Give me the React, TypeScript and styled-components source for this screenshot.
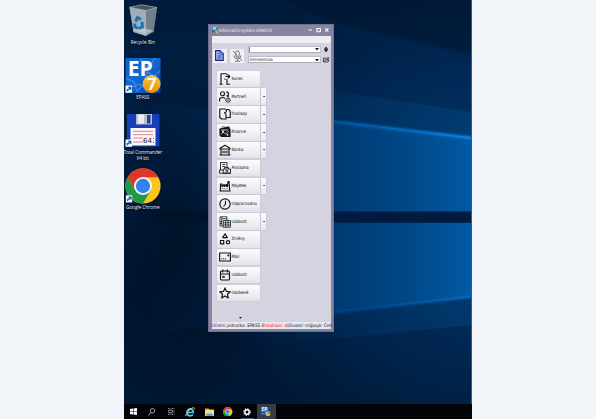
import React from 'react';
import styled, { createGlobalStyle } from 'styled-components';

const GlobalStyle = createGlobalStyle`
  * { box-sizing: border-box; }
  html, body { margin: 0; width: 100%; height: 100%; overflow: hidden; background: #f1f5f9; }
  svg { display: block; flex: none; }
`;

const Page = styled.main`
  display: flex;
  justify-content: center;
  width: 596px;
  height: 419px;
  background: #f1f5f9;
`;

const Desktop = styled.section`
  position: relative;
  display: flex;
  flex-direction: column;
  width: 348px;
  height: 419px;
  overflow: hidden;
  background: #001a3a;
  font-family: 'Open Sans', 'Noto Sans', sans-serif;
`;

const WallpaperLayer = styled.div`
  position: absolute;
  inset: 0;
`;

const ShortcutColumn = styled.div`
  position: relative;
  flex: 1;
  display: flex;
  flex-direction: column;
  width: 37.6px;
  padding-top: 3px;
`;

const Shortcut = styled.div`
  display: flex;
  flex-direction: column;
  align-items: center;
  height: 55px;
`;

const ShortcutLabel = styled.div<{ $spacing: number }>`
  margin-top: 1px;
  color: #e8edf4;
  font-size: 4.7px;
  line-height: 5.6px;
  letter-spacing: ${(p) => p.$spacing}px;
  text-align: center;
  white-space: pre;
  text-shadow: 0 0.5px 1px #000;
`;

const Taskbar = styled.footer`
  position: relative;
  display: flex;
  height: 15px;
  background: #02040a;
`;

const TaskButton = styled.div<{ $active?: boolean; $running?: boolean }>`
  display: flex;
  align-items: center;
  justify-content: center;
  width: 18.95px;
  height: 15px;
  background: ${(p) => (p.$active ? '#343b49' : 'transparent')};
  box-shadow: ${(p) => (p.$running ? 'inset 3px 0 #02040a, inset -3px 0 #02040a, inset 0 -1px #35688c' : 'none')};
`;

const AppWindow = styled.section`
  position: absolute;
  left: 84.3px;
  top: 24px;
  display: flex;
  flex-direction: column;
  width: 126.2px;
  height: 308.3px;
  padding: 0 2.6px 2.2px;
  background: #85859f;
  border: 0.5px solid #716f8d;
  font-family: 'DejaVu Sans Condensed', 'DejaVu Sans', sans-serif;
`;

const TitleBar = styled.header`
  display: flex;
  align-items: center;
  height: 10.7px;
  flex: none;
  color: #eeeef7;
`;

const Title = styled.h1`
  flex: 1;
  margin: 0 0 0 0.2px;
  font: 400 4.5px/9px 'DejaVu Sans Condensed', 'DejaVu Sans', sans-serif;
  letter-spacing: -0.06px;
  white-space: nowrap;
`;

const MenuBar = styled.div`
  height: 7.4px;
  flex: none;
  background: #edecf4;
`;

const Client = styled.div`
  flex: 1;
  display: flex;
  flex-direction: column;
  min-height: 0;
  background: #d4d3df;
`;

const Toolbar = styled.div`
  display: flex;
  align-items: center;
  height: 23px;
  padding: 1px 2px 0 0.7px;
`;

const ToolButton = styled.button`
  display: flex;
  flex: none;
  align-items: center;
  justify-content: center;
  width: 14.2px;
  height: 14.2px;
  margin: 1.5px 3.4px 0 0;
  padding: 0;
  border: 0;
  background: #efeff4;
`;

const Fields = styled.div`
  display: flex;
  flex-direction: column;
  gap: 3px;
  margin: 0 0 1px 0.7px;
`;

const FieldRow = styled.div`
  display: flex;
  align-items: center;
  gap: 2px;
  height: 7.4px;
`;

const Combo = styled.div`
  display: flex;
  align-items: center;
  justify-content: space-between;
  width: 73px;
  height: 7.4px;
  padding: 0 1px 0 0;
  border: 1px solid #bdbdc9;
  border-bottom-color: #adadb9;
  background: #fff;
  color: #26262c;
  font-size: 4.5px;
  line-height: 5px;
  letter-spacing: -0.06px;
`;

const Caret = styled.span`
  width: 1px;
  height: 5px;
  background: #8a8a92;
`;

const Menu = styled.nav`
  display: flex;
  flex-direction: column;
  gap: 1.46px;
  margin: 4.5px 0 0 5px;
`;

const MenuRow = styled.div`
  display: flex;
  gap: 1.4px;
  height: 16.4px;
`;

const MenuButton = styled.button`
  display: flex;
  align-items: center;
  gap: 0.6px;
  width: 43.2px;
  height: 16.4px;
  padding: 0 0 0 2px;
  border: 0;
  border-radius: 0.6px;
  background: linear-gradient(#fbfbfc, #eeeef2 65%, #e2e1e9);
  box-shadow: 0 0 1px #9f9eac;
  color: #131318;
  font: 400 4.4px/6px 'DejaVu Sans Condensed', 'DejaVu Sans', sans-serif;
  letter-spacing: -0.09px;
  white-space: nowrap;
`;

const SplitButton = styled.button`
  display: flex;
  align-items: center;
  justify-content: center;
  width: 4.4px;
  height: 16.4px;
  padding: 0;
  border: 0;
  background: linear-gradient(#fbfbfc, #e9e9ef);
  box-shadow: 0 0 1px #9f9eac;
`;

const Overflow = styled.div`
  flex: 1;
  display: flex;
  align-items: flex-end;
  justify-content: center;
  padding: 0 62px 2.4px 0;
`;

const StatusBar = styled.footer`
  display: flex;
  flex: none;
  height: 7.5px;
  background: #e9e8f0;
  color: #24242b;
  font-size: 4.7px;
  line-height: 7.3px;
`;

const StatusCell = styled.span<{ $width: number; $spacing?: number; $alert?: boolean }>`
  width: ${(p) => p.$width}px;
  flex: none;
  white-space: nowrap;
  letter-spacing: ${(p) => p.$spacing ?? 0}px;
  color: ${(p) => (p.$alert ? '#f0242c' : 'inherit')};
`;

const Wallpaper = () => (
  <svg width="348" height="419" viewBox="124 0 348 419">
    <defs>
      <linearGradient id="base" x1="0" y1="0" x2="0" y2="1">
        <stop offset="0" stopColor="#001b3b" /><stop offset=".45" stopColor="#002149" />
        <stop offset=".7" stopColor="#00183a" /><stop offset="1" stopColor="#001833" />
      </linearGradient>
      <radialGradient id="glow" gradientUnits="userSpaceOnUse" cx="490" cy="220" r="310">
        <stop offset="0" stopColor="#0066b9" stopOpacity=".42" /><stop offset=".55" stopColor="#00458a" stopOpacity=".24" />
        <stop offset="1" stopColor="#001a39" stopOpacity="0" />
      </radialGradient>
      <linearGradient id="pane" x1="0" x2="1">
        <stop offset="0" stopColor="#002b59" stopOpacity=".1" /><stop offset=".57" stopColor="#003a73" />
        <stop offset=".8" stopColor="#004886" /><stop offset="1" stopColor="#005aa6" />
      </linearGradient>
      <linearGradient id="ray" x1="0" x2="1">
        <stop offset="0" stopColor="#003e7d" stopOpacity="0" /><stop offset=".45" stopColor="#0065ba" stopOpacity=".75" />
        <stop offset="1" stopColor="#0b84ea" />
      </linearGradient>
      <linearGradient id="beam" x1="0" x2="1">
        <stop offset="0" stopColor="#004275" stopOpacity="0" /><stop offset="1" stopColor="#004b87" stopOpacity=".42" />
      </linearGradient>
      <radialGradient id="left"><stop stopColor="#00070f" stopOpacity=".55" /><stop offset="1" stopColor="#00070f" stopOpacity="0" /></radialGradient>
      <filter id="soft" x="-10%" y="-30%" width="120%" height="160%"><feGaussianBlur stdDeviation="1.2" /></filter>
    </defs>
    <path d="M124 0h348v419H124z" fill="url(#base)" />
    <path d="M124 0h348v419H124z" fill="url(#glow)" />
    <path d="M285 0H472V55L334 22z" fill="#00152f" opacity=".55" filter="url(#soft)" />
    <path d="M240 77L472 112V138L240 111z" fill="url(#beam)" />
    <path d="M150 102L472 138V212H150z" fill="url(#pane)" />
    <path d="M150 223H472V297L150 333z" fill="url(#pane)" />
    <path d="M240 110.5L472 138" stroke="url(#ray)" strokeWidth="2.8" filter="url(#soft)" />
    <path d="M240 110.5L472 138" stroke="url(#ray)" strokeWidth=".8" />
    <path d="M240 324L472 297" stroke="url(#ray)" strokeWidth="1.8" opacity=".8" filter="url(#soft)" />
    <path d="M150 211.5H472V222.5H150z" fill="#001b3f" />
    <path d="M240 327L472 298V325L240 348z" fill="url(#beam)" />
    <ellipse cx="180" cy="240" rx="110" ry="180" fill="url(#left)" />
    <path d="M471.5 0V404" stroke="#315d83" />
  </svg>
);

const Arrow = ({ y = 27 }: { y?: number }) => (
  <g transform={`translate(0.5 ${y - 0.5})`}>
    <path d="M0 0h6.5v7.3H0z" fill="#f2f6fa" />
    <path d="M1.8 5.8V4h2M2.6 1.8h2.7v2.7M5 2L2.4 4.6" fill="none" stroke="#17579a" strokeWidth="1.1" />
  </g>
);

const RecycleArt = () => (
  <svg width="36" height="36" viewBox="0 0 36 36">
    <path d="M4.5 4.2L17 1.8L32 4.4L28.5 28.8L21 33L8.5 29z" fill="#8996a1" opacity=".95" />
    <path d="M4.5 4.2L21 7.5L21 33L8.5 29z" fill="#a3adb6" /><path d="M21 7.5L32 4.4L28.5 28.8L21 33z" fill="#727f8c" />
    <path d="M4.5 4.2L17 1.8L32 4.4L21 7.5z" fill="#46545f" stroke="#c3cad0" strokeWidth=".5" />
    <path d="M8.5 27L15 24L28.5 27.5L21 31.8z" fill="#cbd1d6" opacity=".65" />
    <g fill="none" stroke="#1674bd" strokeWidth="2.8"><path d="M10.5 18.5l2-4 3.5 2" /><path d="M17 19l.5 5-4 1.5" /><path d="M13 25.5l-3.5-2 .5-3" /></g>
  </svg>
);

const EpassArt = () => (
  <svg width="36" height="36" viewBox="0 0 36 36">
    <defs>
      <linearGradient id="epbg" x1="0" x2="1" y1="0" y2="1"><stop stopColor="#0864ce" /><stop offset=".5" stopColor="#1269d0" /><stop offset="1" stopColor="#083bab" /></linearGradient>
      <linearGradient id="epgold" x1="0" y1="0" x2="0" y2="1"><stop stopColor="#ffc440" /><stop offset="1" stopColor="#e88f0c" /></linearGradient>
    </defs>
    <path d="M.5 0H35.5V35H.5z" fill="url(#epbg)" />
    <path d="M1 20l8 4 3 9 7-7 3-12 7 4 6-5M15 1l6 8 5-3 4-6M1 31l13-5 8 5" fill="none" stroke="#72b4ef" strokeWidth="1.5" opacity=".4" />
    <text x="2.8" y="17.8" fill="#fff" fontFamily="Open Sans, sans-serif" fontSize="21" fontWeight="700" textLength="25" lengthAdjust="spacingAndGlyphs">EP</text>
    <circle cx="26.6" cy="26" r="9" fill="url(#epgold)" />
    <text x="22.2" y="32" fill="#fff" fontFamily="Open Sans, sans-serif" fontSize="16" fontWeight="700">7</text>
    <Arrow y={28} />
  </svg>
);

const FloppyArt = () => (
  <svg width="36" height="36" viewBox="0 0 36 36">
    <path d="M2 1h31.5l1 1v31.5H4l-2-2z" fill="#163fba" /><path d="M11 1h16v10.5H11z" fill="#b9c0ca" /><path d="M13 1.5h6v9h-6z" fill="#edf0f3" />
    <path d="M22 2h3.5v8.5H22z" fill="#24418e" /><path d="M5.5 15h25v17.5h-25z" fill="#faf8f8" />
    <path d="M8 18.3h20M8 21.7h20M8 25h10M8 29h10" stroke="#da777e" strokeWidth=".9" />
    <text x="18" y="30.4" fill="#262229" fontFamily="DejaVu Sans, sans-serif" fontSize="7">64</text><path d="M28.5 25v1M28.5 29v1" stroke="#262229" strokeWidth=".8" />
    <Arrow y={27} />
  </svg>
);

const ChromeMark = () => (
  <>
    <circle cx="18" cy="18" r="18" fill="#fac51f" />
    <path d="M2.4 9A18 18 0 0 1 33.6 9H18L10.2 13.5V22.5z" fill="#df3629" />
    <path d="M2.4 9L10.2 22.5L18 27 25.8 22.5 18 36A18 18 0 0 1 2.4 9" fill="#249943" />
    <circle cx="18" cy="18" r="9.2" fill="#f6f9fc" /><circle cx="18" cy="18" r="7.3" fill="#3182ed" />
  </>
);

const ChromeArt = () => <svg width="36" height="36" viewBox="-.4 -.4 36.8 36.8"><ChromeMark /><Arrow y={28} /></svg>;

const shortcuts = [
  { label: 'Recycle Bin', art: <RecycleArt />, spacing: -0.03 },
  { label: 'EPASS', art: <EpassArt />, spacing: -0.1 },
  { label: 'Total Commander\n64 bit', art: <FloppyArt />, spacing: -0.04 },
  { label: 'Google Chrome', art: <ChromeArt />, spacing: -0.04 },
];

const glyphs: Record<string, React.ReactNode> = {
  exit: <><path d="M1 22.5h6M4 22.5V1.5h11M16 1.5v3M16 12v10.5h6" /><path d="M12 11v2.5M13 7h8M18 3.5L21.5 7 18 10.5" /></>,
  people: <><circle cx="7" cy="5.5" r="4" /><path d="M1 21v-3q0-5 6-5 3 0 5 2M14 1.8q5 0 5 4t-4 4M17 10.5q2 .6 3 2" /><circle cx="18" cy="18.5" r="4" strokeWidth="1.5" /><circle cx="18" cy="18.5" r="1.2" strokeWidth="1" /><path d="M18 12.5v2M18 22.5v2M12 18.5h2M22 18.5h2M14 14.5l1 1M22 14.5l-1 1M14 22.5l1-1M22 22.5l-1-1" strokeWidth="1.2" /></>,
  documents: <><path d="M13 22H5l-3.5-3V2H12q3 0 3 4 0 3-4 3l3 4v9z" /><path d="M15 3h4q3.5 1 3.5 5v11H15" /></>,
  money: <><path d="M2 6l18-4v4h2v15H5l-3-3z" fill="currentColor" /><path d="M4 8h15M4 17l4-5 5 4 6-5" stroke="#ececf1" strokeWidth="1.6" /><circle cx="8" cy="11" r="2" fill="#ececf1" stroke="none" /><circle cx="17" cy="17.5" r="1.8" fill="#ececf1" stroke="none" /><path d="M5 4l4-3 4 2 4-1 3 2" strokeWidth="1.5" /></>,
  bank: <><path d="M2 8.5l10-6 10 6v1.5H2zM1 22h22M4 10v11M20 10v11" /><path d="M8 13.5v5M12 13.5v5M16 13.5v5" /></>,
  cash: <g strokeWidth="1.7"><path d="M3 16V1h13v11M6.5 5h6M6.5 9h6M1 22.5V16h7M1 22.5h22" /><path d="M8.5 14H23v8.5H8.5zM11 14v-3h8v3" /><circle cx="15.7" cy="18.2" r="2" /></g>,
  factory: <><path d="M3 21V8h3v5l4.5-4v4L15 9v4h2l1-10h2l1.5 18M1 22h22" /><path d="M7 17.5h1.5M11.2 17.5h1.5M15.5 17.5H17" /></>,
  clock: <><circle cx="12" cy="12" r="10.3" /><path d="M13 5.5V12l-4 5" /></>,
  tables: <g strokeWidth="1.5"><path d="M8 20H2V1.5h14V8M5.5 2v17M6 5.5h10M2 11h4M2 15h4" /><path d="M8.5 9H23v13.5H8.5zM8.5 13.5H23M8.5 18H23M13.3 9v13.5M18.2 9v13.5" /></g>,
  shapes: <><path d="M12 1.5l4.5 7.7h-9zM3 15h6.5v6.8H3z" /><circle cx="18" cy="18.5" r="3.4" /></>,
  mail: <><path d="M1.2 4h21.6v16H1.2z" /><path d="M4.5 15.5h2.2M8 15.5h2.2M11.5 15.5h2.2" strokeWidth="1.8" /><path d="M17.5 7.5h2v2.5h-2z" strokeWidth="1.6" /></>,
  calendar: <><rect x="3" y="4" width="18" height="18" rx="2" /><path d="M7.5 1v6M16.5 1v6M3 10h18" /><path d="M7 14.5h4v2.5H7z" fill="currentColor" strokeWidth="1" /></>,
  star: <path d="M12 1.8l3 7 7.6.6-5.8 5 1.9 7.6-6.7-4.1L5.300 22l1.9-7.600-5.800-5 7.600-.6z" />,
};

const MenuIcon = ({ name }: { name: string }) => (
  <svg width="12" height="12" viewBox="0 0 24 24" fill="none" stroke="currentColor" strokeWidth="2.3" strokeLinejoin="round">
    {glyphs[name]}
  </svg>
);

const menuItems = [
  { label: 'Konec', icon: 'exit' },
  { label: 'Partneři', icon: 'people', split: true },
  { label: 'Doklady', icon: 'documents', split: true },
  { label: 'Finance', icon: 'money', split: true },
  { label: 'Banka', icon: 'bank', split: true },
  { label: 'Pokladna', icon: 'cash' },
  { label: 'Majetek', icon: 'factory', split: true },
  { label: 'Odpracováno', icon: 'clock' },
  { label: 'Události', icon: 'tables', split: true },
  { label: 'Změny', icon: 'shapes' },
  { label: 'Mail', icon: 'mail' },
  { label: 'Události', icon: 'calendar' },
  { label: 'Oblíbené', icon: 'star' },
];

const DownArrow = ({ size = 2 }: { size?: number }) => (
  <svg width={size} height={size * 0.6} viewBox="0 0 10 6"><path d="M0 0h10L5 6z" fill="#19191e" /></svg>
);

const WindowControls = () => (
  <svg width="24" height="8" viewBox="0 0 24 8" fill="none" stroke="#fafaff" strokeWidth="1.1">
    <path d="M1.5 4H5M10 2.5h3.4v3.2H10zM18.300 2.300l3.100 3.400M21.400 2.300L18.300 5.700" />
  </svg>
);

const SmallEpass = ({ size }: { size: number }) => (
  <svg width={size} height={size} viewBox="0 0 10 10">
    <path d="M0 0h8v8.300H1L0 7z" fill="#2269bd" />
    <text x=".6" y="4.700" fontSize="5.200" fontWeight="700" fontFamily="Open Sans, sans-serif" fill="#fff">EP</text>
    <path d="M5 4.800h4.800v3q-.4 1.500-2.400 2.200-2-.7-2.400-2.200z" fill="#edb64b" /><path d="M7.500 5h2.200v2.500H7.500z" fill="#418bd0" />
  </svg>
);

const AppLauncher = () => (
  <AppWindow>
    <TitleBar><SmallEpass size={6.5} /><Title>Informační systém EPASS®</Title><WindowControls /></TitleBar>
    <MenuBar />
    <Client>
      <Toolbar>
        <ToolButton aria-label="Dokument">
          <svg width="9" height="11" viewBox="0 0 18 22" fill="#a8b5eb" stroke="#15219a" strokeWidth="2.2"><path d="M1.200 1.200H10l6.500 6V20.800H1.200z" /><path d="M10 1v7h6M5 7h2M5 12h8M5 16h8" strokeWidth="1.600" /></svg>
        </ToolButton>
        <ToolButton aria-label="Mikrofon">
          <svg width="11" height="12" viewBox="0 0 22 24" fill="none" stroke="#76767d" strokeWidth="2"><rect x="7.500" y="1.500" width="7" height="13" rx="3.500" /><path d="M4 11q0 7 7 7t7-7M11 18v4M6 22.500h10M2 2l18 20" /></svg>
        </ToolButton>
        <Fields>
          <FieldRow>
            <Combo><Caret /><DownArrow size={4} /></Combo>
            <svg width="6" height="7" viewBox="0 0 12 14" fill="none" stroke="#222" strokeWidth="1.700"><path d="M6 2L3.500 5h5zM6 12L3.500 9h5zM2 7h8M6 5v4" /></svg>
          </FieldRow>
          <FieldRow>
            <Combo><span>mmoserova</span><DownArrow size={4} /></Combo>
            <svg width="6.500" height="6" viewBox="0 0 13 12" fill="none" stroke="#222" strokeWidth="1.500"><path d="M1 10V2h4l1 2h4v2M1 10l3-4h8l-2 4zM8 1.500h4v2" /></svg>
          </FieldRow>
        </Fields>
      </Toolbar>
      <Menu>
        {menuItems.map((item, i) => (
          <MenuRow key={i}>
            <MenuButton><MenuIcon name={item.icon} />{item.label}</MenuButton>
            {item.split && <SplitButton aria-label={item.label}><DownArrow size={2.2} /></SplitButton>}
          </MenuRow>
        ))}
      </Menu>
      <Overflow><DownArrow size={3} /></Overflow>
      <StatusBar>
        <StatusCell $width={50.3} $spacing={-0.03}>Účetní jednotka: EPASS s</StatusCell>
        <StatusCell $width={24} $spacing={-0.06} $alert>Databáze: e</StatusCell>
        <StatusCell $width={25} $spacing={-0.09}>Uživatel: má</StatusCell>
        <StatusCell $width={21} $spacing={-0.18}>Jazyk: Češt</StatusCell>
      </StatusBar>
    </Client>
  </AppWindow>
);

export default function App() {
  return (
    <>
      <GlobalStyle />
      <Page>
        <Desktop>
          <WallpaperLayer><Wallpaper /></WallpaperLayer>
          <ShortcutColumn>
            {shortcuts.map((s) => (
              <Shortcut key={s.label}>{s.art}<ShortcutLabel $spacing={s.spacing}>{s.label}</ShortcutLabel></Shortcut>
            ))}
          </ShortcutColumn>
          <AppLauncher />
          <Taskbar>
            <TaskButton><svg width="7" height="7" viewBox="0 0 14 14" fill="#fff"><path d="M0 2l6-1v5.500H0zM7 .900L14 0v6.500H7zM0 7.500h6V13l-6-1zM7 7.500h7V14l-7-1z" /></svg></TaskButton>
            <TaskButton><svg width="8" height="8" viewBox="0 0 16 16" fill="none" stroke="#d0d1d4" strokeWidth="1.500"><circle cx="9" cy="5.500" r="4.500" /><path d="M6 9l-5 6" /></svg></TaskButton>
            <TaskButton><svg width="7" height="7" viewBox="0 0 14 14" fill="none" stroke="#aeb0b5" strokeWidth="1.300"><path d="M1 0v2h8V0M1 5h8v4H1zM1 14v-2h8v2M12 0v3M12 5v4M12 11v3" /></svg></TaskButton>
            <TaskButton><svg width="10" height="10" viewBox="0 0 20 20" fill="none"><path d="M16 15q-5 5-10 1-4-5 0-10 5-4 9 0 2 2 1.500 5H6" stroke="#55c7f3" strokeWidth="3.400" /><path d="M3 17q-4 3 0-4Q9 3 17 1q3 0 1 4" stroke="#f1cb49" strokeWidth="1.800" /></svg></TaskButton>
            <TaskButton><svg width="9" height="8" viewBox="0 0 18 16"><path d="M0 1h7l2 2h9v13H0z" fill="#e1a83d" /><path d="M0 4h18v11H0z" fill="#f9df85" /><path d="M3 11h12v5H3z" fill="#50a7d6" /></svg></TaskButton>
            <TaskButton><svg width="9.500" height="9.500" viewBox="0 0 36 36"><ChromeMark /></svg></TaskButton>
            <TaskButton $running><svg width="8" height="8" viewBox="0 0 16 16" fill="none" stroke="#fff"><circle cx="8" cy="8" r="4.400" strokeWidth="2.800" /><circle cx="8" cy="8" r="6.500" strokeWidth="2.200" strokeDasharray="2.550 2.550" /></svg></TaskButton>
            <TaskButton $active><SmallEpass size={9.5} /></TaskButton>
          </Taskbar>
        </Desktop>
      </Page>
    </>
  );
}
